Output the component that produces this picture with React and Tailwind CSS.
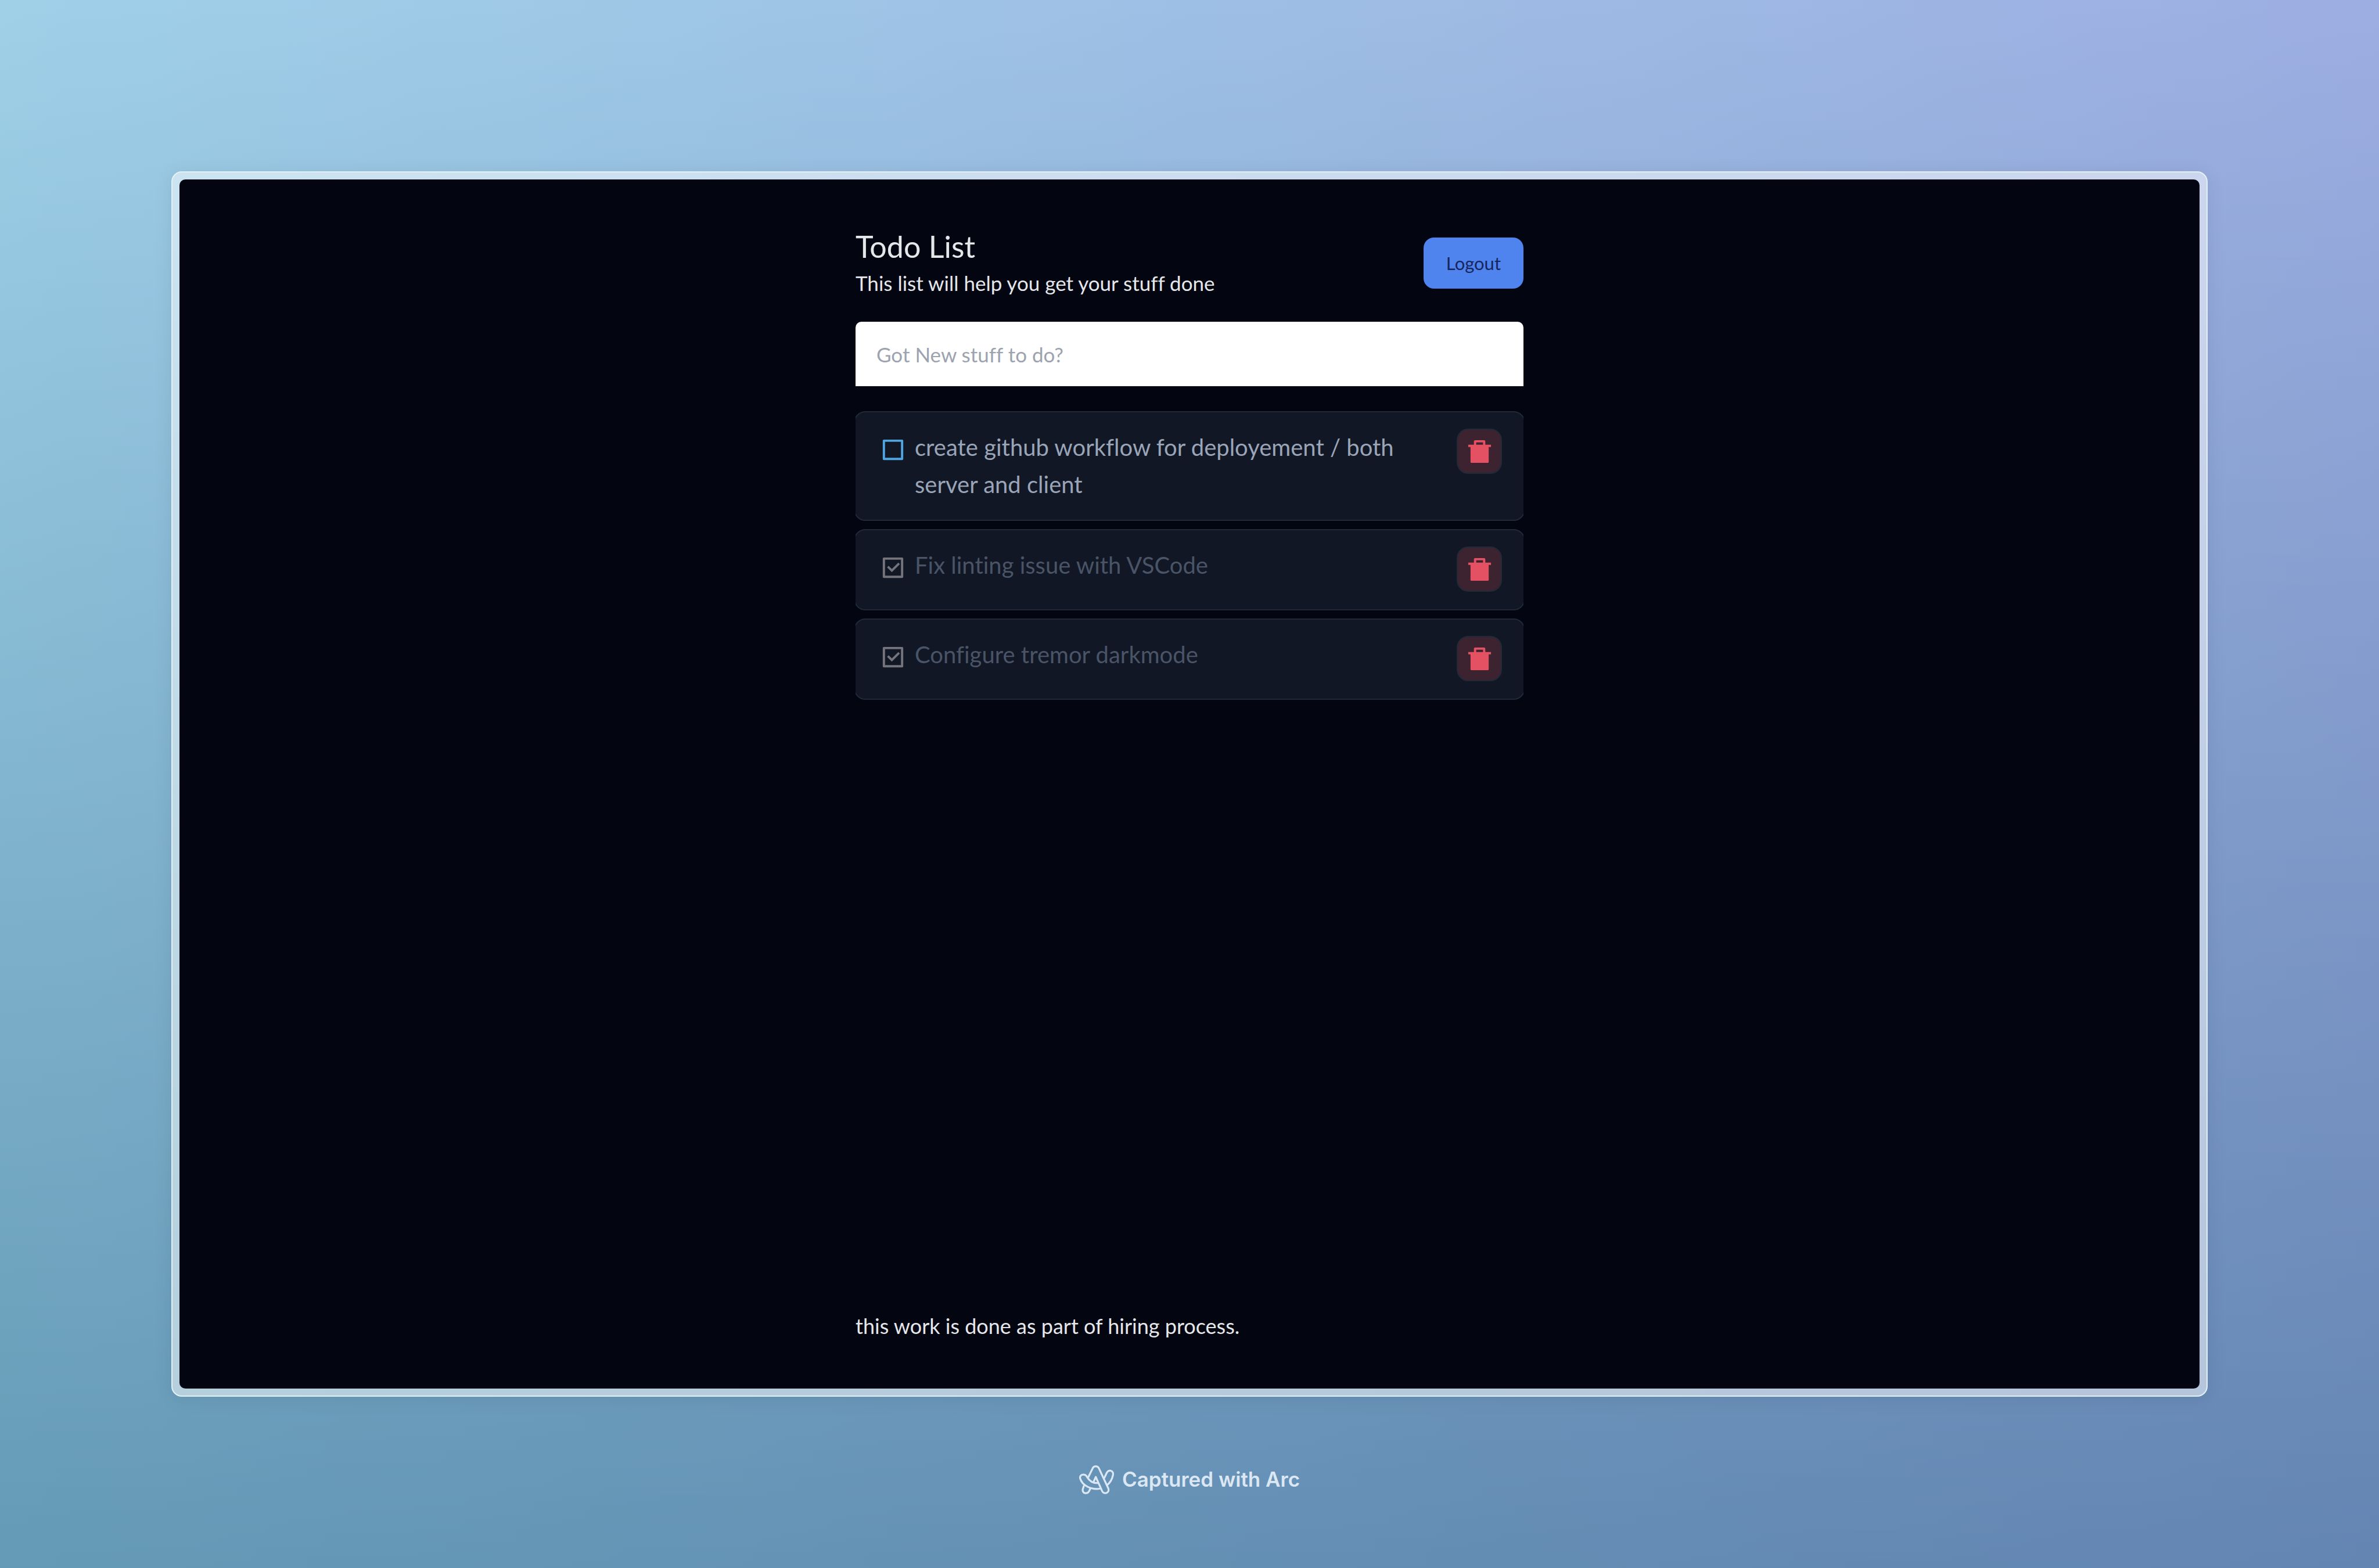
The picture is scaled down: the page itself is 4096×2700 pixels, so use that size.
import { RiCheckboxLine, RiCheckboxBlankLine, RiDeleteBin7Fill } from "react-icons/ri";

const todos = [
  { id: 1, text: "create github workflow for deployement / both server and client", done: false },
  { id: 2, text: "Fix linting issue with VSCode", done: true },
  { id: 3, text: "Configure tremor darkmode", done: true },
];

function TodoCard({ todo }) {
  return (
    <li className="-mx-[3px] flex min-h-[140px] items-start justify-between rounded-[20px] border-2 border-[#212838] bg-[#111725] pt-7 pr-[38px] pb-[29px] pl-[42px]">
      <label className="flex items-start gap-[14px]">
        <input type="checkbox" defaultChecked={todo.done} className="peer sr-only" />
        {todo.done ? (
          <RiCheckboxLine className="mt-[13px] size-[47px] shrink-0 text-[#75747c]" />
        ) : (
          <RiCheckboxBlankLine className="mt-[13px] size-[47px] shrink-0 text-[#4ea5e0]" />
        )}
        <span
          className={
            todo.done
              ? "text-[40px] leading-[64px] text-[#4a5467]"
              : "max-w-[860px] text-[40px] leading-[64px] text-[#9aa5b8]"
          }
        >
          {todo.text}
        </span>
      </label>
      <button
        type="button"
        aria-label={`Delete ${todo.text}`}
        className="grid size-[78px] shrink-0 place-items-center rounded-[20px] border-2 border-[#212a38] bg-[#3d2230] text-[#e35163]"
      >
        <RiDeleteBin7Fill className="size-[47px]" />
      </button>
    </li>
  );
}

function ArcLogo() {
  return (
    <svg
      viewBox="27 33 222 183"
      className="h-[50px] w-[60px]"
      fill="none"
      stroke="#d9e8f4"
      strokeWidth="12"
      strokeLinejoin="round"
      strokeLinecap="round"
    >
      <path d="M86 107 L112 54 C120 34 145 34 154 54 L212 178 C218 192 212 204 203 208 C191 213 179 208 174 198 L133 107 L119 138" />
      <path d="M148 145 C118 148 94 134 78 108 C72 96 64 92 53 92 C38 92 30 104 34 118 C46 158 100 192 162 181" />
      <path d="M57 164 L51 182 C46 196 54 209 66 210 C78 211 86 206 90 198 L98 182" />
      <path d="M188 112 L202 82 C208 69 218 65 228 67 C241 70 246 83 242 97 C237 121 224 143 205 159" />
    </svg>
  );
}

export default function App() {
  return (
    <div className="flex min-h-screen flex-col bg-[linear-gradient(to_bottom,rgba(0,62,96,0),rgba(0,62,96,0.37)),linear-gradient(to_right,#9fd0e8,#9daee2)] px-[295px] pt-[295px] font-['Lato',sans-serif] [font-variant-ligatures:none]">
      <div className="flex flex-1 rounded-[18px] border-2 border-[#e4f0f7] bg-white/50 p-3 shadow-[0_4px_32px_rgba(0,20,40,0.08)]">
        <main className="flex flex-1 flex-col items-center rounded-[10px] bg-[#030611]">
          <div className="flex w-full max-w-[1150px] flex-1 flex-col">
            <header className="flex items-start justify-between pt-[84px]">
              <div>
                <h1 className="text-[52px] leading-[62px] text-[#e6e7eb]">Todo List</h1>
                <p className="text-[35px] leading-[64px] text-[#e6e7eb]">This list will help you get your stuff done</p>
              </div>
              <button type="button" className="mt-4 h-[88px] rounded-[18px] bg-[#4f83ee] px-[39px] text-[31px] text-[#16265c]">
                Logout
              </button>
            </header>
            <input
              type="text"
              aria-label="New todo"
              placeholder="Got New stuff to do?"
              className="mt-[35px] h-[111px] w-full rounded-t-[10px] bg-white px-9 text-[35px] text-[#111827] placeholder:text-[#9ca3af]"
            />
            <ul className="mt-[43px] flex flex-col gap-[14px] overflow-hidden">
              {todos.map((todo) => (
                <TodoCard key={todo.id} todo={todo} />
              ))}
            </ul>
            <footer className="mt-auto pb-20 text-[36px] leading-[56px] text-[#e6e7eb]">
              this work is done as part of hiring process.
            </footer>
          </div>
        </main>
      </div>
      <div className="flex h-[295px] items-center justify-center gap-[14px] pb-[10px] text-[35px] font-semibold text-[#dbe7f2]">
        <ArcLogo />
        <span className="font-['Inter',sans-serif]">Captured with Arc</span>
      </div>
    </div>
  );
}
